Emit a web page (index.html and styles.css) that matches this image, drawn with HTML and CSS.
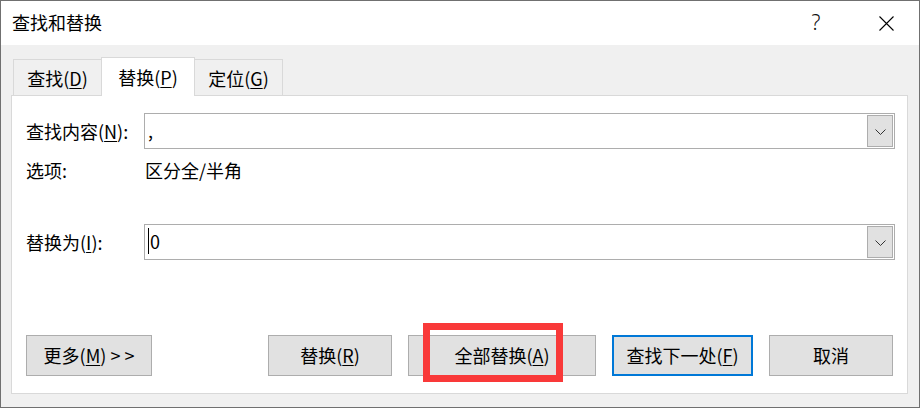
FILE: index.html
```html
<!DOCTYPE html>
<html lang="zh-CN">
<head>
<meta charset="utf-8">
<title>查找和替换</title>
<link rel="stylesheet" href="styles.css">
</head>
<body>
<div class="window">
  <div class="titlebar">
    <span class="title">查找和替换</span>
    <span class="help">?</span>
    <span class="close">
      <svg width="15" height="15" viewBox="0 0 15 15"><path d="M0.5 0.5 L14.5 14.5 M14.5 0.5 L0.5 14.5" stroke="#000" stroke-width="1.1" fill="none"/></svg>
    </span>
  </div>
  <div class="content">
    <div class="tabs">
      <div class="tab tab-first">查找(<u>D</u>)</div>
      <div class="tab tab-active">替换(<u>P</u>)</div>
      <div class="tab tab-last">定位(<u>G</u>)</div>
    </div>
    <div class="panel">
      <div class="row row-find">
        <div class="label">查找内容(<u>N</u>):</div>
        <div class="combo">
          <div class="combo-text">,</div>
          <div class="drop"><svg width="11" height="6" viewBox="0 0 11 6"><polyline points="0.5,0.5 5.5,5.5 10.5,0.5" fill="none" stroke="#333" stroke-width="1"/></svg></div>
        </div>
      </div>
      <div class="row row-opts">
        <div class="label">选项:</div>
        <div class="opts">区分全/半角</div>
      </div>
      <div class="row row-repl">
        <div class="label">替换为(<u>I</u>):</div>
        <div class="combo">
          <div class="combo-text"><span class="caret"></span>0</div>
          <div class="drop"><svg width="11" height="6" viewBox="0 0 11 6"><polyline points="0.5,0.5 5.5,5.5 10.5,0.5" fill="none" stroke="#333" stroke-width="1"/></svg></div>
        </div>
      </div>
      <div class="buttons">
        <div class="btn btn-more">更多(<u>M</u>)&nbsp;&gt; &gt;</div>
        <div class="btn btn-replace">替换(<u>R</u>)</div>
        <div class="btn btn-all">全部替换(<u>A</u>)<span class="highlight"></span></div>
        <div class="btn btn-next">查找下一处(<u>F</u>)</div>
        <div class="btn btn-cancel">取消</div>
      </div>
    </div>
  </div>
</div>
</body>
</html>
```
FILE: styles.css
```css
* { box-sizing: border-box; }
html, body { margin: 0; padding: 0; background: #f0f0f0; }
body {
  font-family: "Noto Sans CJK SC", "Noto Sans", sans-serif;
  font-size: 18px;
  color: #000;
}
u { text-decoration-thickness: 1px; text-underline-offset: 2px; }

.window {
  width: 920px;
  height: 408px;
  border: 1px solid #707070;
  background: #f0f0f0;
  display: flex;
  flex-direction: column;
}

.titlebar {
  height: 44px;
  flex: none;
  background: #fff;
  display: flex;
  align-items: center;
  padding: 0 10px 0 11px;
  line-height: 1;
}
.title { padding-bottom: 2px; }
.help {
  margin-left: auto;
  width: 46px;
  text-align: center;
  font-family: "Noto Sans", sans-serif;
  font-size: 21px;
  font-weight: 300;
  color: #111;
  margin-right: 24px;
  padding-bottom: 2px;
}
.close {
  width: 46px;
  height: 44px;
  display: flex;
  align-items: center;
  justify-content: center;
}

.content {
  flex: 1;
  padding: 12px 11px 13px 10px;
  display: flex;
  flex-direction: column;
}

.tabs {
  height: 38px;
  flex: none;
  display: flex;
  align-items: flex-end;
  padding-left: 2px;
}
.tab {
  height: 36px;
  width: 88px;
  border: 1px solid #d9d9d9;
  border-bottom: none;
  background: #f0f0f0;
  display: flex;
  align-items: center;
  justify-content: center;
  line-height: 1;
}
.tab-first { border-right: none; }
.tab-last { border-left: none; }
.tab-active {
  width: 94px;
  height: 39px;
  margin-bottom: -1px;
  background: #fff;
  position: relative;
  padding-bottom: 1px;
}

.panel {
  height: 299px;
  flex: none;
  border: 1px solid #d9d9d9;
  background: #fff;
  padding: 17px 12px 0 14px;
  display: flex;
  flex-direction: column;
}

.row {
  display: flex;
  align-items: center;
  line-height: 1;
}
.label { width: 118px; flex: none; }
.row-find { height: 36px; }
.row-opts { height: 28px; margin-top: 7px; }
.row-repl { height: 36px; margin-top: 40px; }
.opts { padding-left: 1px; }

.combo {
  flex: 1;
  height: 36px;
  border: 1px solid #adadad;
  padding: 1px;
  display: flex;
  align-items: center;
  background: #fff;
}
.combo-text {
  flex: 1;
  padding-left: 2px;
  display: flex;
  align-items: center;
  padding-bottom: 3px;
}
.caret {
  display: inline-block;
  width: 1px;
  height: 26px;
  background: #000;
  margin-right: 1px;
}
.drop {
  width: 26px;
  height: 32px;
  border: 1px solid #adadad;
  background: #e1e1e1;
  display: flex;
  align-items: center;
  justify-content: center;
  padding-top: 1px;
}

.buttons {
  margin-top: 75px;
  display: flex;
  line-height: 1;
}
.btn {
  height: 41px;
  width: 124px;
  border: 1px solid #adadad;
  background: #e1e1e1;
  display: flex;
  align-items: center;
  justify-content: center;
  flex: none;
  padding-bottom: 1px;
  white-space: pre;
}
.btn-more { width: 126px; }
.btn-replace { margin-left: 116px; }
.btn-all { margin-left: 16px; width: 188px; position: relative; }
.btn-next { margin-left: 16px; width: 141px; border: 2px solid #0078d7; }
.btn-cancel { margin-left: 16px; }

.highlight {
  position: absolute;
  left: 14px;
  top: -13px;
  width: 140px;
  height: 59px;
  border: 7px solid #f93939;
}
```
